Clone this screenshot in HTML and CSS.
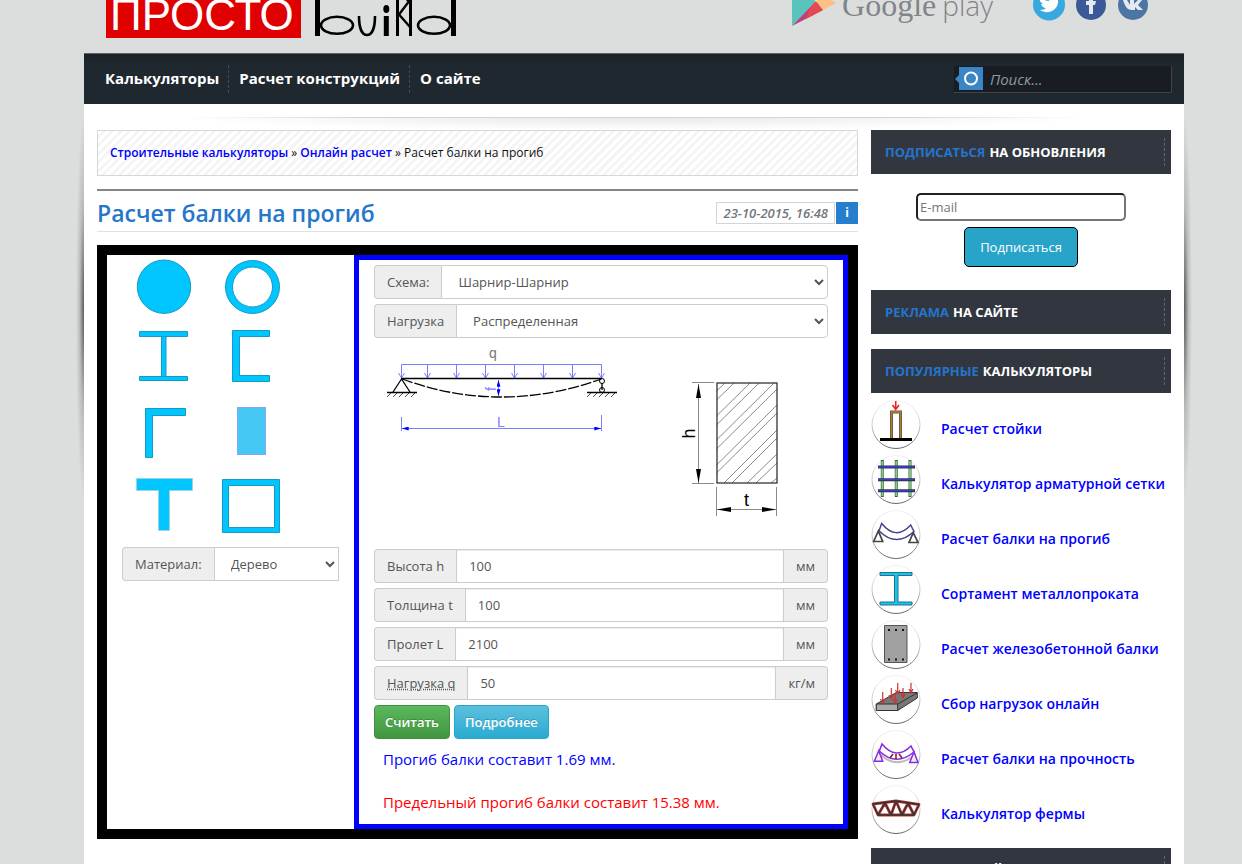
FILE: index.html
```html
<!DOCTYPE html>
<html lang="ru">
<head>
<meta charset="utf-8">
<title>Расчет балки на прогиб</title>
<link rel="stylesheet" href="styles.css">
</head>
<body>
<div class="page">
  <header class="header">
    <a class="logo" href="#" aria-label="Просто build">
      <span class="logo-red">ПРОСТО</span>
      <svg class="logo-build" viewBox="314 -4 144 42" width="144" height="42" fill="none" stroke="#000">
        <path d="M317.5-4V36M453.500-4V36M386.300 16V36" stroke-width="5"/>
        <ellipse cx="337" cy="25.300" rx="16" ry="8.500" stroke-width="2.600"/>
        <ellipse cx="434" cy="25.300" rx="16" ry="8.500" stroke-width="2.600"/>
        <path d="M359 16C359 28 362 35 367 35S375 28 375 16" stroke-width="2.600"/>
        <ellipse cx="386.300" cy="9" rx="3" ry="4" fill="#000" stroke="none"/>
        <path d="M397.500-4V36M410.500-4V36" stroke-width="3"/>
        <path d="M410 0L399 14.500L410 27M405-3L410 3" stroke-width="2.400"/>
      </svg>
    </a>
    <div class="header-side">
      <a class="gplay" href="#">
        <svg viewBox="794 -16 44 43" width="44" height="43">
          <path d="M794-16V27L818 2Z" fill="#58c4bd"/>
          <path d="M794 27L818 2L825 11Z" fill="#b8437c"/>
          <path d="M812 9L818 2L825 11L808 20Z" fill="#e54850"/>
          <path d="M818 2L824-5L838 4L825 11Z" fill="#fdbf82"/>
          <path d="M814-2L820-7L824-4L818 3Z" fill="#d9f29b"/>
        </svg>
        <span class="gplay-google">Google</span><span class="gplay-play">play</span>
      </a>
      <a href="#" aria-label="Twitter"><svg viewBox="1033 -15 34 34" width="34" height="34"><circle cx="1050" cy="1.500" r="16" fill="#36a9e1"/><path d="M1041-7C1044-3 1047-2 1050-2C1050-7 1054-9 1058-6L1061-7L1059-3C1060 8 1048 12 1041 7C1044 7 1046 6 1047 5C1044 5 1043 3 1042 1L1044 1C1041-1 1040-3 1041-7Z" fill="#fff"/></svg></a>
      <a href="#" aria-label="Facebook"><svg viewBox="1074 -15 34 34" width="34" height="34"><circle cx="1091" cy="2" r="15" fill="#3b5998"/><path d="M1089 11V2H1086V-2H1089C1088-7 1091-9 1096-8V-5C1093-5 1093-4 1093-2H1096L1095 2H1093V11Z" fill="#e6e9ef"/></svg></a>
      <a href="#" aria-label="ВКонтакте"><svg viewBox="1116 -15 34 34" width="34" height="34"><circle cx="1133" cy="2" r="15" fill="#4c75a3"/><path d="M1123-3H1127L1130 2V-3H1134V1L1138-3H1142L1138 2L1143 7H1138L1135 4V7H1132C1127 7 1125 3 1123-3Z" fill="#e6e9ef"/></svg></a>
    </div>
  </header>

  <div class="sheet">
    <nav class="nav">
      <div class="nav-links">
        <a href="#">Калькуляторы</a>
        <a href="#">Расчет конструкций</a>
        <a href="#">О сайте</a>
      </div>
      <form class="search">
        <button class="search-btn" type="button" aria-label="Найти"><svg viewBox="0 0 28 23" width="28" height="23"><path d="M0 12L4 8V0H28V23H4V16Z" fill="#3a85c6"/><circle cx="16" cy="11.500" r="6" fill="none" stroke="#fff" stroke-width="2"/></svg></button>
        <input class="search-input" type="search" placeholder="Поиск..." aria-label="Поиск">
      </form>
    </nav>

    <div class="divider"></div>

    <div class="columns">
      <main class="main">
        <div class="crumbs"><a href="#">Строительные калькуляторы</a> » <a href="#">Онлайн расчет</a> » Расчет балки на прогиб</div>
        <div class="title-row">
          <h1>Расчет балки на прогиб</h1>
          <div class="date"><time>23-10-2015, 16:48</time><span class="info">i</span></div>
        </div>

        <div class="calc">
          <section class="shapes">
            <div class="shape-grid">
              <button type="button" aria-label="Круг"><svg viewBox="120 255 88 72"><circle cx="164" cy="286.700" r="26.700"/></svg></button>
              <button type="button" aria-label="Труба"><svg viewBox="208 255 88 72"><path fill-rule="evenodd" d="M225.500 287a27 26.500 0 1 0 54 0a27 26.500 0 1 0-54 0ZM232.500 287a20 20 0 1 0 40 0a20 20 0 1 0-40 0Z"/></svg></button>
              <button type="button" aria-label="Двутавр"><svg viewBox="120 327 88 72"><path d="M139.500 331.500H187.500V336.500H166V376.500H187.500V380.500H139.500V376.500H161.500V336.500H139.500Z"/><path d="M161.500 336.500H166M161.500 376.500H166"/></svg></button>
              <button type="button" aria-label="Швеллер"><svg viewBox="208 327 88 72"><path d="M232.500 330.500H269.500V336.500H239.500V375.500H269.500V381.500H232.500Z"/></svg></button>
              <button type="button" aria-label="Уголок"><svg viewBox="120 399 88 72"><path d="M145.500 408.500H185.500V415.500H152.500V457.500H145.500Z"/></svg></button>
              <button type="button" aria-label="Прямоугольник"><svg viewBox="208 399 88 72"><rect class="picked" x="237.500" y="407.500" width="28" height="47"/></svg></button>
              <button type="button" aria-label="Тавр"><svg class="soft" viewBox="120 471 88 72"><path d="M136.500 478.500H192.500V490.500H169.500V530.500H158.500V490.500H136.500Z"/></svg></button>
              <button type="button" aria-label="Квадратная труба"><svg viewBox="208 471 88 72"><path fill-rule="evenodd" d="M222.500 479.500H279.500V532.500H222.500ZM228.500 485.500V527.500H274.500V485.500Z"/></svg></button>
            </div>
            <div class="field">
              <label class="tag" for="material">Материал:</label>
              <select id="material" class="square"><option>Дерево</option></select>
            </div>
          </section>

          <section class="params">
            <div class="field"><label class="tag" for="scheme">Схема:</label><select id="scheme"><option>Шарнир-Шарнир</option></select></div>
            <div class="field"><label class="tag" for="load">Нагрузка</label><select id="load"><option>Распределенная</option></select></div>

            <svg class="diagram" viewBox="374 343 454 206" preserveAspectRatio="xMinYMin meet">
              <defs>
                <marker id="tip" viewBox="0 0 10 6" refX="10" refY="3" markerWidth="7" markerHeight="4" markerUnits="userSpaceOnUse" orient="auto-start-reverse"><path d="M0 0L10 3L0 6Z" fill="#00f" stroke="none"/></marker>
                <marker id="tipk" viewBox="0 0 14 5" refX="14" refY="2.500" markerWidth="14" markerHeight="5" markerUnits="userSpaceOnUse" orient="auto-start-reverse"><path d="M0 0L14 2.500L0 5Z" fill="#000" stroke="none"/></marker>
              </defs>
              <g fill="none" stroke="#7d7dff">
                <path d="M401.500 378V364.500H601.500V378M427.500 364V378M456.500 364V378M485.500 364V378M514.500 364V378M543.500 364V378M572.500 364V378"/>
                <path d="M398.500 373L401.500 378L404.500 373M424.500 373L427.500 378L430.500 373M453.500 373L456.500 378L459.500 373M482.500 373L485.500 378L488.500 373M511.500 373L514.500 378L517.500 373M540.500 373L543.500 378L546.500 373M569.500 373L572.500 378L575.500 373M598.500 373L601.500 378L604.500 373"/>
                <path d="M401.500 417V431M601.500 415V431"/>
                <path d="M402 428.500H601" marker-start="url(#tip)" marker-end="url(#tip)"/>
                <path d="M498.500 380V396" marker-start="url(#tip)" marker-end="url(#tip)"/>
              </g>
              <g fill="none" stroke="#000">
                <path d="M401 378.500H602" stroke-width="1.500"/>
                <path d="M402 379Q501 415 601 379" stroke-width="1.300" stroke-dasharray="11 2"/>
                <path d="M401.500 379L393 392M401.500 379L410 392M387 392.500H417M587 392.500H617M602 383V390" stroke-width="1.300"/>
                <circle cx="602" cy="381" r="2.500"/><circle cx="602" cy="390" r="2.500"/>
                <path d="M391 393L387 397M397 393L393 397M403 393L399 397M409 393L405 397M415 393L411 397M591 393L587 397M597 393L593 397M603 393L599 397M609 393L605 397M615 393L611 397" stroke-width=".700"/>
              </g>
              <text x="489" y="358" class="thin gray">q</text>
              <text x="497" y="427" class="thin blue">L</text>
              <text transform="translate(496 391) rotate(-90)" class="thin blue">f</text>
              <g fill="none" stroke="#8a8a8a">
                <path d="M716.500 391L725 383M716.500 400L734 383M716.500 416L750 383M716.500 425L759 383M716.500 440L774 383M716.500 449L777 389M716.500 465L777 405M716.500 473L777 413M724 483L777 430M732 483L777 438M747 483L777 454M756 483L777 463M771 483L777 478"/>
                <path d="M692 382.500H714M692 483.500H714M716.500 487V516M776.500 487V516"/>
                <path d="M698.500 384V483" marker-start="url(#tipk)" marker-end="url(#tipk)"/>
                <path d="M717 509.500H776" marker-start="url(#tipk)" marker-end="url(#tipk)"/>
              </g>
              <rect x="717" y="383" width="60" height="100" fill="none" stroke="#333" stroke-width="1.300"/>
              <text transform="translate(695 438.500) rotate(-90)" class="dim">h</text>
              <text x="744" y="506" class="dim">t</text>
            </svg>

            <div class="field"><label class="tag" for="h">Высота h</label><input id="h" type="text" value="100"><span class="tag unit">мм</span></div>
            <div class="field"><label class="tag" for="t">Толщина t</label><input id="t" type="text" value="100"><span class="tag unit">мм</span></div>
            <div class="field"><label class="tag" for="l">Пролет L</label><input id="l" type="text" value="2100"><span class="tag unit">мм</span></div>
            <div class="field"><label class="tag" for="q"><abbr title="Распределенная нагрузка">Нагрузка q</abbr></label><input id="q" type="text" value="50"><span class="tag unit">кг/м</span></div>
            <div class="actions">
              <button class="btn green" type="button">Считать</button>
              <button class="btn cyan" type="button">Подробнее</button>
            </div>
            <p class="result">Прогиб балки составит 1.69 мм.</p>
            <p class="result limit">Предельный прогиб балки составит 15.38 мм.</p>
          </section>
        </div>
      </main>

      <aside class="side">
        <h2 class="side-title"><span>Подписаться</span> на обновления</h2>
        <form class="subscribe">
          <input type="email" placeholder="E-mail" aria-label="E-mail">
          <button type="button">Подписаться</button>
        </form>
        <h2 class="side-title ads"><span>Реклама</span> на сайте</h2>
        <h2 class="side-title"><span>Популярные</span> калькуляторы</h2>
        <ul class="popular">
          <li><a href="#"><svg viewBox="0 0 50 50"><defs><linearGradient id="rim" x1="0" y1="0" x2="0" y2="1"><stop offset="0" stop-color="#f2f2f2"/><stop offset=".5" stop-color="#ccc"/><stop offset="1" stop-color="#666"/></linearGradient></defs><circle class="ring" cx="25" cy="24.500" r="24"/><path d="M20.500 38V12H29.500V38" fill="none" stroke="#555" stroke-width="3"/><path d="M20.500 38V12H29.500V38" fill="none" stroke="#b87b1e" stroke-width="1.500"/><path d="M9 38H41V41H9Z"/><path d="M24.700 1V9M21.500 5L24.700 9.500L28 5" fill="none" stroke="#e22" stroke-width="1.600"/></svg><span>Расчет стойки</span></a></li>
          <li><a href="#"><svg viewBox="0 0 50 50"><circle class="ring" cx="25" cy="24.500" r="24"/><path d="M11.300 5V42M25.300 5V42M39 5V42" stroke="#555" stroke-width="3"/><path d="M11.300 6V41M25.300 6V41M39 6V41" stroke="#6ddb6d" stroke-width="1.800"/><path d="M7 12H44M7 24.700H44M7 35.700H44" stroke="#333" stroke-width="3"/><path d="M7 12H43M7 24.700H43M7 35.700H43" stroke="#3939ee" stroke-width="1.300"/></svg><span>Калькулятор арматурной сетки</span></a></li>
          <li><a href="#"><svg viewBox="0 0 50 50"><circle class="ring" cx="25" cy="24.500" r="24"/><path d="M8 20.700L10.700 13.500Q25 31 39.700 15L43 21.500Q25 38 8 20.700Z" fill="#fff" stroke="#45458d" stroke-width="1.500"/><path d="M7.300 21L2.700 31.500H11.700ZM42.300 22.700L38 32.500H47Z" fill="#fff" stroke="#444" stroke-width="1.700"/></svg><span>Расчет балки на прогиб</span></a></li>
          <li><a href="#"><svg viewBox="0 0 50 50"><circle class="ring" cx="25" cy="24.500" r="24"/><path d="M9 7.500H41V10.500H27V37H41V40H9V37H23.500V10.500H9Z" fill="#16c3ee" stroke="#28738a"/></svg><span>Сортамент металлопроката</span></a></li>
          <li><a href="#"><svg viewBox="0 0 50 50"><circle class="ring" cx="25" cy="24.500" r="24"/><path d="M13.500 5.500H36V42.500H13.500Z" fill="#a0a0a0" stroke="#555"/><path d="M17 10H19M24 10H26M31 10H33M17 39.500H19M24 39.500H26M31 39.500H33" stroke="#111" stroke-width="2"/></svg><span>Расчет железобетонной балки</span></a></li>
          <li><a href="#"><svg viewBox="0 0 50 50"><circle class="ring" cx="25" cy="24.500" r="24"/><path d="M5.300 29L25.300 17.500H46.300V23L26.700 35.500H5.300Z" fill="#777" stroke="#333"/><path d="M5.300 29H26.700V35.500H5.300Z" fill="#aaa" stroke="#333"/><path d="M26.700 29L46 18" stroke="#333"/><path d="M11.700 17V28M9.500 24L11.700 28L14 24M20.300 13V23.500M18 20L20.300 24L22.500 20M24.300 18V28M22 24L24.300 28L26.500 24M26.700 8V19M24.500 15L26.700 19L29 15M32 13V23M30 19L32 23L34 19M40 7.700V18M38 14L40 18L42 14" fill="none" stroke="#c33" stroke-width="1.200"/></svg><span>Сбор нагрузок онлайн</span></a></li>
          <li><a href="#"><svg viewBox="0 0 50 50"><circle class="ring" cx="25" cy="24.500" r="24"/><path d="M9 24Q25 40 44 25" fill="none" stroke="#bbb" stroke-width="2"/><path d="M8.300 21L11 14Q25 31 40 16L43 22Q25 37 8.300 21Z" fill="#fff" stroke="#8a2be2" stroke-width="1.600"/><path d="M22 24L19 28M25 24V29M28 24L31 28" stroke="#822" stroke-width="1.600"/><path d="M7.700 20.700L3.300 31.300H11.700ZM43 22L38.700 32.500H47Z" fill="#eee" stroke="#8a2be2" stroke-width="1.500"/></svg><span>Расчет балки на прочность</span></a></li>
          <li><a href="#"><svg viewBox="0 0 50 50"><circle class="ring" cx="25" cy="24.500" r="24"/><g fill="none" stroke-linejoin="round"><path d="M2 19L25 16L48 19.500L43 30H7ZM7 30L14 18L20 30L25 16L31 30L37 18L43 30" stroke="#b33" stroke-width="2.800"/><path d="M2 19L25 16L48 19.500L43 30H7ZM7 30L14 18L20 30L25 16L31 30L37 18L43 30" stroke="#333" stroke-width="1.400"/></g></svg><span>Калькулятор фермы</span></a></li>
        </ul>
        <h2 class="side-title"><span>Реклама</span> на сайте</h2>
      </aside>
    </div>
  </div>
</div>
</body>
</html>
```
FILE: styles.css
```css
* { box-sizing: border-box; }
body {
  margin: 0;
  background: #dcdedd;
  font-family: "Open Sans", "Noto Sans", sans-serif;
  font-size: 12px;
  color: #111;
}
a { color: #00f; text-decoration: none; }
button, input, select { font-family: inherit; }

.page {
  height: 100vh;
  overflow: hidden;
  padding: 0 58px 0 84px;
}

.header {
  height: 53px;
  display: flex;
  align-items: flex-end;
  justify-content: space-between;
  padding: 0 34px 15px 22px;
}
.logo { display: flex; gap: 13px; align-items: flex-end; }
.logo-red {
  background: #e00000;
  color: #fff;
  font: 44px/46px "Liberation Sans", Arial, sans-serif;
  padding: 0 4px;
  width: 195px;
}
.header-side { display: flex; gap: 8px; padding-bottom: 12px; }
.header-side svg { display: block; }
.header-side > a { align-self: center; }
.gplay { display: flex; align-items: center; margin-right: 31px; color: #818488; }
.gplay svg { margin-right: 6px; }
.gplay-google { font: 32px/40px "Liberation Serif", serif; margin-right: 6px; }
.gplay-play { font: 300 28px/40px "Open Sans", sans-serif; }

.sheet {
  position: relative;
  background: #fff;
  min-height: 100vh;
}
.sheet::before, .sheet::after {
  content: "";
  position: absolute;
  top: 60px;
  width: 8px;
  height: 390px;
}
.sheet::before {
  left: -8px;
  background: radial-gradient(ellipse 100% 50% at 100% 50%, rgba(0,0,0,.6), rgba(0,0,0,.15) 55%, transparent);
}
.sheet::after {
  right: -8px;
  background: radial-gradient(ellipse 100% 50% at 0 50%, rgba(0,0,0,.6), rgba(0,0,0,.15) 55%, transparent);
}

.nav {
  height: 51px;
  border-top: 1px solid #5c6469;
  background: linear-gradient(#1a2127, #20282f 12px);
  display: flex;
  justify-content: space-between;
  align-items: center;
  padding: 0 12px 0 11px;
}
.nav-links { display: flex; }
.nav-links a {
  color: #fff;
  font-size: 15px;
  line-height: 26px;
  font-weight: 700;
  padding: 0 9px 2px 10px;
}
.nav-links a + a { border-left: 1px dashed #434a50; }
.search {
  display: flex;
  align-items: center;
  width: 218px;
  height: 27px;
  background: #191d23;
  border: 1px solid #3d444a;
  border-width: 0 1px 1px 0;
}
.search-btn { border: 0; padding: 0 0 0 1px; background: none; display: flex; }
.search-input {
  flex: 1;
  min-width: 0;
  border: 0;
  padding: 1px 7px 0;
  background: none;
  color: #8b98a5;
  font-size: 15px;
  font-style: italic;
}
.search-input::placeholder { color: #8b98a5; }

.divider {
  height: 13px;
  margin: 13px 100px 0;
  background: radial-gradient(ellipse 50% 100% at 50% 0, #e9e9e9, #fff);
  border-top: 1px solid;
  border-image: linear-gradient(90deg, #fff, #d4d4d4 20%, #d4d4d4 80%, #fff) 1;
}

.columns { display: flex; gap: 13px; padding: 0 13px; }
.main { flex: 1; min-width: 0; }

.crumbs {
  height: 46px;
  line-height: 44px;
  padding: 0 12px;
  border: 1px solid #d3d8dc;
  background: repeating-linear-gradient(135deg, #fff 0 3px, #f5f5f5 3px 6px);
}
.crumbs a { font-weight: 600; }
.title-row {
  margin-top: 13px;
  height: 43px;
  border-top: 2px solid #84868b;
  border-bottom: 1px solid #e1e2e3;
  display: flex;
  justify-content: space-between;
  align-items: center;
}
h1 {
  margin: 0;
  padding-top: 4px;
  font-size: 23px;
  line-height: 28px;
  font-weight: 600;
  color: #2577cb;
}
.date { display: flex; gap: 1px; padding-top: 4px; line-height: 20px; }
.date time {
  border: 1px solid #d2d5d7;
  padding: 0 6px;
  color: #70767b;
  font-size: 13px;
  font-style: italic;
  font-weight: 600;
}
.info { width: 22px; line-height: 22px; text-align: center; background: #267fcc; color: #fff; font-weight: 700; }

.calc { margin-top: 13px; border: 10px solid #000; display: flex; }
.shapes { width: 247px; padding: 0 15px 0 13px; }
.shape-grid {
  display: grid;
  grid-template-columns: 88px 88px;
  grid-auto-rows: 72px;
  margin-bottom: 4px;
}
.shape-grid button { border: 0; padding: 0; background: none; }
.shape-grid svg { display: block; width: 88px; height: 72px; fill: #00c5ff; stroke: #159bc0; }
.shape-grid .soft { stroke: #9fd3e0; }
.shape-grid .picked { fill: #45c8f4; stroke: #84a9ec; }
.shapes .field { margin-left: 2px; }

.params { flex: 1; min-width: 0; border: 5px solid #00f; padding: 5px 15px 10px; }
.field { display: flex; height: 34px; margin-bottom: 5px; font-size: 13px; color: #555; }
.tag {
  line-height: 32px;
  padding: 0 12px;
  border: 1px solid #ccc;
  border-right: 0;
  border-radius: 4px 0 0 4px;
  background: #eee;
  white-space: nowrap;
}
.unit { border: 1px solid #ccc; border-left: 0; border-radius: 0 4px 4px 0; }
.field input, .field select {
  flex: 1;
  min-width: 0;
  border: 1px solid #ccc;
  padding: 0 12px;
  background: #fff;
  color: #555;
  font-size: 13px;
}
.field select { border-radius: 0 4px 4px 0; }
.field .square { border-radius: 0; }
.field input { box-shadow: inset 0 1px 1px rgba(0,0,0,.08); }
.diagram { display: block; width: 100%; height: 206px; }
.thin { font: 14px "Liberation Sans", sans-serif; }
.gray { fill: #777; }
.blue { fill: #7d7dff; }
.dim { font: 18px "Liberation Sans", sans-serif; }

.actions { display: flex; gap: 4px; }
.btn {
  height: 34px;
  padding: 0 10px;
  border-radius: 4px;
  color: #fff;
  font-size: 13px;
  font-weight: 600;
  text-shadow: 0 -1px 0 rgba(0,0,0,.2);
}
.green { border: 1px solid #3e8f3e; background: linear-gradient(#5cb85c, #419641); }
.cyan { border: 1px solid #28a4c9; background: linear-gradient(#5bc0de, #2aabd2); }
.result { margin: 9px 9px 21px; font-size: 15px; line-height: 22px; color: #00f; }
.limit { margin-bottom: 1px; color: #f00; }

.side { width: 300px; flex: none; }
.side-title {
  margin: 0;
  height: 44px;
  padding: 8px 6px 8px 14px;
  background: #32373f;
  color: #fff;
  font-size: 13px;
  line-height: 28px;
  font-weight: 700;
  text-transform: uppercase;
  display: flex;
  gap: 4px;
}
.side-title::after { content: ""; margin-left: auto; border-left: 1px dashed #626870; }
.side-title span { color: #2574cd; }
.ads { margin-bottom: 15px; }
.subscribe {
  display: flex;
  flex-direction: column;
  align-items: center;
  gap: 6px;
  padding: 19px 0 23px;
}
.subscribe input {
  width: 210px;
  height: 28px;
  border: 2px inset #767676;
  border-radius: 5px;
  padding: 1px 2px;
  font-size: 13px;
}
.subscribe button {
  height: 40px;
  padding: 0 15px;
  border: 1px solid #000;
  border-radius: 5px;
  background: #28a4c9;
  color: #fff;
  font-size: 13px;
}
.popular { list-style: none; margin: 0; padding: 7px 0 8px; }
.popular a { display: flex; gap: 20px; height: 55px; font-size: 14px; font-weight: 600; line-height: 58px; white-space: nowrap; }
.popular svg { width: 50px; height: 50px; flex: none; }
.ring { fill: #fff; stroke: url(#rim); stroke-width: 1; }
```
